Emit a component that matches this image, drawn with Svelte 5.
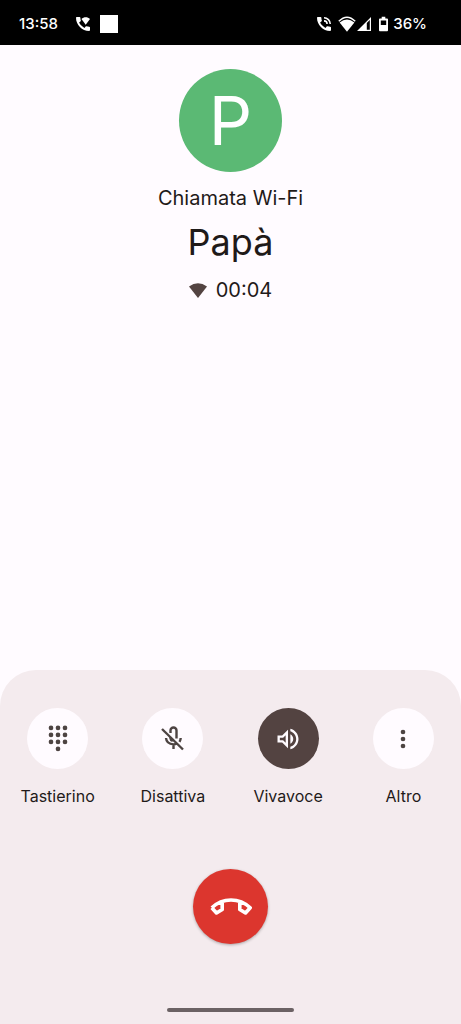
<script lang="ts">
  let muted = $state(false);
  let speaker = $state(true);
  let keypadOpen = $state(false);

  const handset =
    "M20.01 15.38c-1.23 0-2.42-.2-3.53-.56-.35-.12-.74-.03-1.01.24l-1.57 1.97c-2.83-1.35-5.48-3.9-6.89-6.83l1.95-1.66c.27-.28.35-.67.24-1.02-.37-1.11-.56-2.3-.56-3.53 0-.54-.45-.99-.99-.99H4.19C3.65 3 3 3.24 3 3.99 3 13.28 10.73 21 20.01 21c.71 0 .99-.63.99-1.18v-3.45c0-.54-.45-.99-.99-.99z";

  const dots = [
    [6, 3], [12, 3], [18, 3],
    [6, 9], [12, 9], [18, 9],
    [6, 15], [12, 15], [18, 15],
    [12, 21],
  ];
</script>

<div class="screen">
  <header class="status-bar">
    <div class="status-left">
      <span>13:58</span>
      <svg class="phone-icon" viewBox="3 3 18 18" aria-hidden="true">
        <path d={handset} />
        <path d="M10 5.500C13 2.500 18 2.500 21 5.500L15.500 13z" />
      </svg>
      <span class="app-square"></span>
    </div>
    <div class="status-right">
      <svg class="phone-icon" viewBox="3 3 18 18" aria-hidden="true">
        <path d={handset} />
        <path d="M12 3v2a7 7 0 0 1 7 7h2a9 9 0 0 0-9-9zM12 7v2a3 3 0 0 1 3 3h2a5 5 0 0 0-5-5z" />
      </svg>
      <svg class="wifi-icon" viewBox="0 0 18 16" aria-hidden="true">
        <path d="M.8 5.300Q9-2.800 17.200 5.300" class="wifi-arc" />
        <path d="M1.600 6.600Q9 .6 16.400 6.600L9 15.800z" />
      </svg>
      <svg class="signal-icon" viewBox="0 0 14 14" aria-hidden="true">
        <path d="M14 0v14H0zM12.800 3L9.800 6V12.800h3z" fill-rule="evenodd" />
      </svg>
      <svg class="battery-icon" viewBox="0 0 10 16" aria-hidden="true">
        <path d="M3 0h4v2h2q1 0 1 1v12q0 1-1 1H1q-1 0-1-1V3q0-1 1-1h2zM2 4v5h6V4z" fill-rule="evenodd" />
      </svg>
      <span>36%</span>
    </div>
  </header>

  <main class="caller">
    <div class="avatar">P</div>
    <p class="call-type">Chiamata Wi-Fi</p>
    <h1>Papà</h1>
    <div class="timer">
      <svg viewBox="0 0 18 15" aria-hidden="true">
        <path d="M0 3.500Q9-3 18 3.500L9 15z" />
      </svg>
      <span>00:04</span>
    </div>
  </main>

  <section class="panel">
    <div class="actions">
      <button class="action" class:active={keypadOpen} onclick={() => (keypadOpen = !keypadOpen)}>
        <span class="circle">
          <svg viewBox="0 0 24 24" aria-hidden="true">
            {#each dots as [x, y]}
              <circle cx={x} cy={y - 0.5} r="2" />
            {/each}
          </svg>
        </span>
        <span class="label">Tastierino</span>
      </button>

      <button class="action" class:active={muted} onclick={() => (muted = !muted)}>
        <span class="circle">
          <svg class="line-icon" viewBox="0 0 28 28" aria-hidden="true">
            <path d="M3 4L24 24.500" />
            <path d="M11.500 8V5.500a3 3 0 0 1 6 0v8" />
            <path d="M11.500 12v1.500q0 1.500 2.300 2.500" />
            <path d="M7 13q.5 6 7.500 6.400q2 0 3.500-.9M14.500 19.400V24" />
            <path d="M21.700 13q-.1 2-1.200 3.800" />
          </svg>
        </span>
        <span class="label">Disattiva</span>
      </button>

      <button class="action" class:active={speaker} onclick={() => (speaker = !speaker)}>
        <span class="circle">
          <svg viewBox="0 0 24 24" aria-hidden="true">
            <path d="M3 9v6h4l5 5V4L7 9H3zm7-.17v6.340L7.830 13H5v-2h2.830L10 8.830zM16.500 12c0-1.770-1.020-3.290-2.500-4.030v8.050c1.480-.73 2.500-2.250 2.500-4.020zM14 3.230v2.060c2.890.86 5 3.540 5 6.710s-2.110 5.850-5 6.710v2.060c4.010-.91 7-4.490 7-8.770s-2.990-7.860-7-8.770z" />
          </svg>
        </span>
        <span class="label">Vivavoce</span>
      </button>

      <button class="action">
        <span class="circle">
          <svg viewBox="0 0 24 24" aria-hidden="true">
            <circle cx="12" cy="6" r="2" />
            <circle cx="12" cy="12" r="2" />
            <circle cx="12" cy="18" r="2" />
          </svg>
        </span>
        <span class="label">Altro</span>
      </button>
    </div>

    <button class="hang-up" aria-label="Termina chiamata">
      <svg viewBox="0 0 42 18" aria-hidden="true">
        <path d="M1.800 9.800Q10 2 21 2T40.200 9.800L35.500 15L29.800 11.500V4M12.200 4V11.500L6.500 15L1.800 9.800" />
      </svg>
    </button>

    <div class="home-bar"></div>
  </section>
</div>

<style>
  :global(body) {
    margin: 0;
  }

  .screen {
    min-height: 100vh;
    display: flex;
    flex-direction: column;
    background: #fffbff;
    color: #1f1a19;
    font-family: Inter, Roboto, sans-serif;
  }

  .status-bar {
    height: 45px;
    box-sizing: border-box;
    padding: 2px 34px 0 19px;
    display: flex;
    align-items: center;
    justify-content: space-between;
    background: #000;
    color: #fff;
    font-size: 15px;
    font-weight: 500;
    line-height: 20px;
  }

  .status-bar svg {
    fill: currentColor;
  }

  .status-left,
  .status-right {
    display: flex;
    align-items: center;
  }

  .status-left {
    gap: 10px;
  }

  .status-left .phone-icon {
    margin-left: 8px;
  }

  .status-right .phone-icon {
    margin-right: 7px;
  }

  .phone-icon {
    width: 14px;
    height: 14px;
  }

  .app-square {
    width: 18px;
    height: 18px;
    background: #fff;
  }

  .wifi-icon {
    width: 18px;
    height: 16px;
  }

  .wifi-icon .wifi-arc {
    fill: none;
    stroke: currentColor;
    stroke-width: 1.5;
  }

  .signal-icon {
    width: 14px;
    height: 14px;
    margin: 0 8px 0 1px;
  }

  .battery-icon {
    width: 9px;
    height: 16px;
    margin-right: 5px;
  }

  .caller {
    display: flex;
    flex-direction: column;
    align-items: center;
    padding-top: 24px;
  }

  .avatar {
    width: 103px;
    height: 103px;
    border-radius: 50%;
    background: #5bb974;
    color: #fff;
    font-size: 68px;
    line-height: 103px;
    text-align: center;
  }

  .call-type {
    margin: 12px 0 0;
    font-size: 20px;
    line-height: 28px;
  }

  h1 {
    margin: 4px 0 0;
    font-size: 36px;
    font-weight: 400;
    line-height: 52px;
  }

  .timer {
    display: flex;
    align-items: center;
    gap: 9px;
    margin-top: 8px;
    font-size: 20px;
    line-height: 28px;
  }

  .timer svg {
    width: 18px;
    height: 15px;
    fill: #534341;
  }

  .panel {
    margin-top: auto;
    display: flex;
    flex-direction: column;
    align-items: center;
    padding: 38px 0 12px;
    border-radius: 36px 36px 0 0;
    background: #f4ebee;
  }

  .actions {
    width: 100%;
    display: grid;
    grid-template-columns: repeat(4, 1fr);
  }

  button {
    border: none;
    padding: 0;
    font: inherit;
    color: inherit;
    cursor: pointer;
  }

  .action {
    display: flex;
    flex-direction: column;
    align-items: center;
    gap: 16px;
    background: none;
  }

  .circle {
    width: 61px;
    height: 61px;
    display: flex;
    align-items: center;
    justify-content: center;
    border-radius: 50%;
    background: #fffbff;
    color: #4d4442;
  }

  .active .circle {
    background: #534341;
    color: #fffbff;
  }

  .circle svg {
    width: 28px;
    height: 28px;
    fill: currentColor;
  }

  .circle .line-icon {
    fill: none;
    stroke: currentColor;
    stroke-width: 2.4;
  }

  .label {
    font-size: 16px;
    line-height: 22px;
  }

  .hang-up {
    width: 75px;
    height: 75px;
    margin-top: 62px;
    display: flex;
    align-items: center;
    justify-content: center;
    border-radius: 50%;
    background: #dc362e;
    box-shadow: 0 1px 3px rgba(0, 0, 0, 0.3);
  }

  .hang-up svg {
    width: 42px;
    height: 18px;
    fill: none;
    stroke: #fff;
    stroke-width: 3.6;
    stroke-linejoin: round;
  }

  .home-bar {
    width: 127px;
    height: 4px;
    margin-top: 64px;
    border-radius: 2px;
    background: #6b6264;
  }
</style>
